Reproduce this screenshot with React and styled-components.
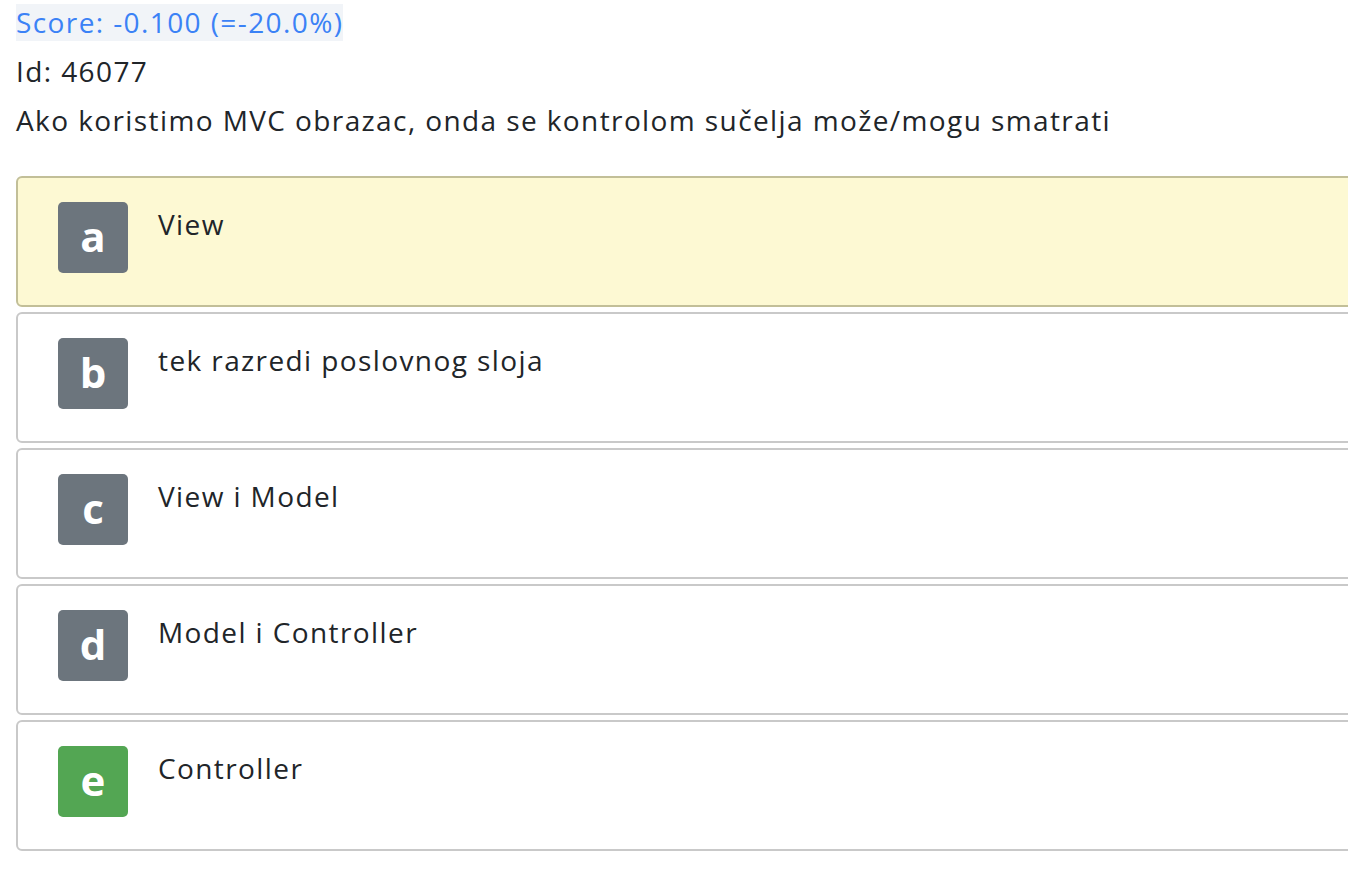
import React from 'react'
import styled, { createGlobalStyle } from 'styled-components'

const GlobalStyle = createGlobalStyle`
  html, body {
    margin: 0;
    padding: 0;
    background: #ffffff;
    overflow: hidden;
  }
  body {
    font-family: 'Open Sans', 'Noto Sans', sans-serif;
    color: #212529;
  }
`

const answers = [
  { letter: 'a', text: 'View', selected: true },
  { letter: 'b', text: 'tek razredi poslovnog sloja' },
  { letter: 'c', text: 'View i Model' },
  { letter: 'd', text: 'Model i Controller' },
  { letter: 'e', text: 'Controller', correct: true },
]

const App = () => (
  <Page>
    <GlobalStyle />
    <Header>
      <Score>Score: -0.100 (=-20.0%)</Score>
      <Line>Id: 46077</Line>
      <Line>Ako koristimo MVC obrazac, onda se kontrolom sučelja može/mogu smatrati</Line>
    </Header>
    <Answers>
      {answers.map((a) => (
        <Answer key={a.letter} $selected={a.selected}>
          <Badge $correct={a.correct}>{a.letter}</Badge>
          <AnswerText>{a.text}</AnswerText>
        </Answer>
      ))}
    </Answers>
  </Page>
)

export default App

const Page = styled.div`
  width: 1420px;
  padding: 4px 0 0 16px;
  box-sizing: border-box;
`

const Header = styled.div`
  display: flex;
  flex-direction: column;
  align-items: flex-start;
  gap: 12px;
  font-size: 28px;
  line-height: 37px;
  letter-spacing: 1.4px;
`

const Score = styled.span`
  color: #3b82f6;
  background: #f1f4f8;
`

const Line = styled.span`
  color: #212529;
`

const Answers = styled.div`
  display: flex;
  flex-direction: column;
  gap: 5px;
  margin-top: 37px;
`

const Answer = styled.div`
  display: flex;
  align-items: flex-start;
  gap: 30px;
  height: 131px;
  box-sizing: border-box;
  padding: 24px 40px;
  border: 2px solid ${(p) => (p.$selected ? '#c2bf98' : '#c9c9c9')};
  border-radius: 6px;
  background: ${(p) => (p.$selected ? '#fdf9d3' : '#ffffff')};
`

const Badge = styled.div`
  width: 70px;
  height: 71px;
  flex: none;
  display: flex;
  align-items: center;
  justify-content: center;
  border-radius: 5px;
  background: ${(p) => (p.$correct ? '#53a653' : '#6c757d')};
  color: #ffffff;
  font-size: 42px;
  font-weight: 700;
  line-height: 1;
  padding-bottom: 4px;
  box-sizing: border-box;
`

const AnswerText = styled.div`
  font-size: 28px;
  line-height: 44px;
  letter-spacing: 1.4px;
  color: #212529;
`
